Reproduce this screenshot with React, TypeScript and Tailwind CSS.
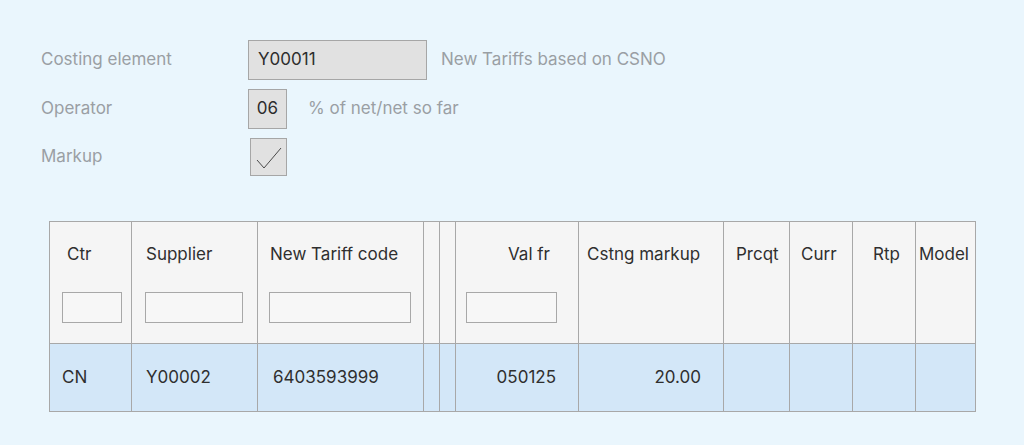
import React from 'react';

const COLS = [
  { key: 'ctr', label: 'Ctr', w: 'w-[82px]', head: 'pl-[17px]', filter: 'w-[60px] ml-[12px]', value: 'CN', cell: 'pl-[12px]' },
  { key: 'sup', label: 'Supplier', w: 'w-[126px]', head: 'pl-[14px]', filter: 'w-[98px] ml-[13px]', value: 'Y00002', cell: 'pl-[14px]' },
  { key: 'tar', label: 'New Tariff code', w: 'w-[166px]', head: 'pl-[12px]', filter: 'w-[142px] ml-[11px]', value: '6403593999', cell: 'pl-[15px]' },
  { key: 'e1', label: '', w: 'w-[16px]', head: '', filter: '', value: '', cell: '' },
  { key: 'e2', label: '', w: 'w-[16px]', head: '', filter: '', value: '', cell: '' },
  { key: 'val', label: 'Val fr', w: 'w-[123px]', head: 'justify-end pr-[28px]', filter: 'w-[91px] ml-[10px]', value: '050125', cell: 'justify-end pr-[22px]' },
  { key: 'mk', label: 'Cstng markup', w: 'w-[145px]', head: 'pl-[8px]', filter: '', value: '20.00', cell: 'justify-end pr-[22px]' },
  { key: 'pq', label: 'Prcqt', w: 'w-[66px]', head: 'pl-[12px]', filter: '', value: '', cell: '' },
  { key: 'cu', label: 'Curr', w: 'w-[63px]', head: 'pl-[11px]', filter: '', value: '', cell: '' },
  { key: 'rt', label: 'Rtp', w: 'w-[63px]', head: 'justify-end pr-[15px]', filter: '', value: '', cell: '' },
  { key: 'md', label: 'Model', w: 'flex-1', head: 'pl-[3px]', filter: '', value: '', cell: '' },
];

export default function App() {
  return (
    <div className="w-[1024px] h-[445px] bg-[#eaf6fd] font-['Inter','Liberation_Sans',sans-serif] text-[17px] overflow-hidden">
      <div className="pt-[40px] pl-[41px] flex flex-col gap-[9px]">
        <div className="flex items-center h-[40px]">
          <span className="w-[207px] text-[#9a9fa4]">Costing element</span>
          <div className="w-[179px] h-[40px] bg-[#e1e1e1] border border-[#a6a6a6] flex items-center pl-[9px] text-[#2d2d2d]">Y00011</div>
          <span className="ml-[14px] text-[#9a9fa4]">New Tariffs based on CSNO</span>
        </div>
        <div className="flex items-center h-[40px]">
          <span className="w-[207px] text-[#9a9fa4]">Operator</span>
          <div className="w-[39px] h-[40px] bg-[#e1e1e1] border border-[#a6a6a6] flex items-center justify-center text-[#2d2d2d]">06</div>
          <span className="ml-[21px] text-[#9a9fa4]">% of net/net so far</span>
        </div>
        <div className="flex items-center h-[38px]">
          <span className="w-[209px] text-[#9a9fa4]">Markup</span>
          <div className="w-[37px] h-[38px] bg-[#e1e1e1] border border-[#a6a6a6] flex items-center justify-center">
            <svg width="32" height="30" viewBox="0 0 32 30" fill="none">
              <path d="M4 18 L11 26 L28 6" stroke="#4a4a4a" strokeWidth="1" />
            </svg>
          </div>
        </div>
      </div>

      <div className="ml-[49px] mt-[45px] w-[927px] border border-[#a8a8a8] text-[#2f2f2f]">
        <div className="flex h-[122px] bg-[#f5f5f5] border-b border-[#a8a8a8]">
          {COLS.map((c, i) => (
            <div key={c.key} className={`${c.w} shrink-0 flex flex-col ${i < COLS.length - 1 ? 'border-r border-[#a8a8a8]' : ''}`}>
              <div className={`flex h-[70px] pt-[20px] ${c.head}`}>{c.label}</div>
              {c.filter && <div className={`${c.filter} h-[31px] border border-[#a8a8a8] bg-[#f7f7f7]`} />}
            </div>
          ))}
        </div>
        <div className="flex h-[67px] bg-[#d3e7f8]">
          {COLS.map((c, i) => (
            <div key={c.key} className={`${c.w} shrink-0 flex items-center ${c.cell} ${i < COLS.length - 1 ? 'border-r border-[#a8a8a8]' : ''}`}>
              {c.value}
            </div>
          ))}
        </div>
      </div>
    </div>
  );
}
